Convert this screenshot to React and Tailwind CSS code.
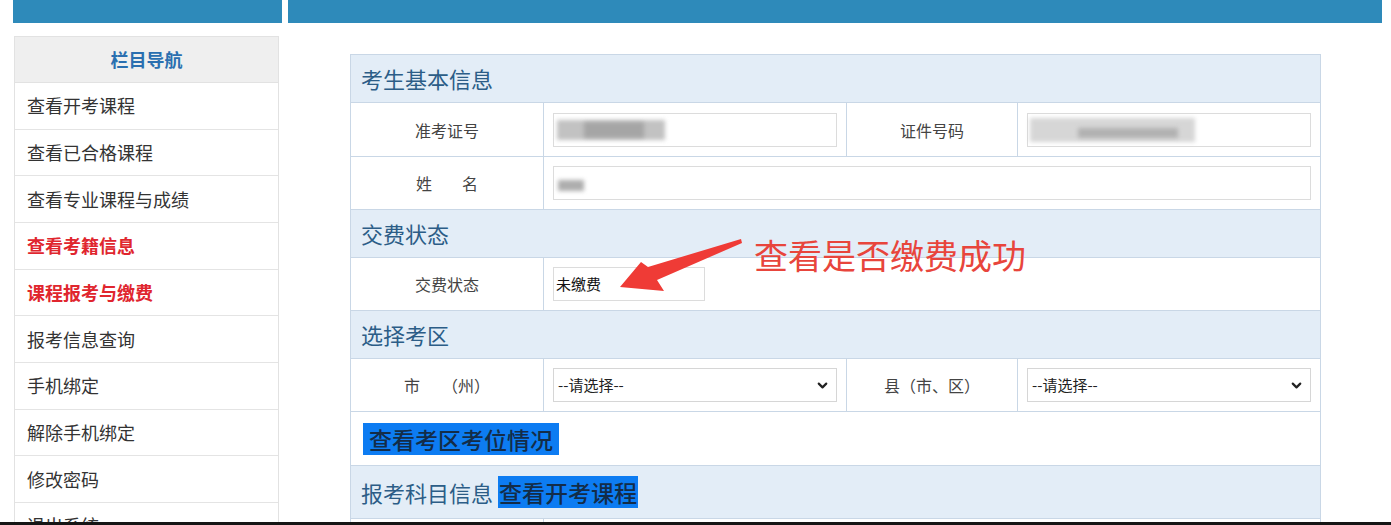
import React from "react";
import { ChevronDown } from "lucide-react";

const font = { fontFamily: '"Noto Sans CJK SC", "Noto Sans", sans-serif' };

const navItems = [
  { label: "查看开考课程" },
  { label: "查看已合格课程" },
  { label: "查看专业课程与成绩" },
  { label: "查看考籍信息", hot: true },
  { label: "课程报考与缴费", hot: true },
  { label: "报考信息查询" },
  { label: "手机绑定" },
  { label: "解除手机绑定" },
  { label: "修改密码" },
  { label: "退出系统" },
];

const Sidebar = () => (
  <div className="w-[265px] border border-[#e2e2e2] bg-white">
    <div className="h-[46px] bg-[#efefef] flex items-center justify-center text-[18px] font-bold text-[#2a6fb0] border-b border-[#e2e2e2]">
      栏目导航
    </div>
    {navItems.map((item) => (
      <div
        key={item.label}
        className={`h-[46.67px] flex items-center pl-[12px] border-b border-[#e4e4e4] text-[18px] ${
          item.hot ? "font-bold text-[#e0262e]" : "text-[#333]"
        }`}
      >
        {item.label}
      </div>
    ))}
  </div>
);

const Blur = ({ className }) => <div className={`absolute bg-[#9a9a9a] blur-[2px] ${className}`} />;

const SectionHead = ({ children }) => (
  <tr className="h-[48px]">
    <td colSpan={4} className="bg-[#e3edf7] border border-[#c9d7e6] pl-[10px] text-[22px] text-[#2c5d87]">
      {children}
    </td>
  </tr>
);

const Label = ({ children }) => (
  <td className="border border-[#c9d7e6] text-center text-[16px] text-[#444]">{children}</td>
);

const Select = () => (
  <div className="h-[34px] border border-[#d6d6d6] bg-white flex items-center justify-between pl-[4px] pr-[6px] text-[15px] text-[#222]">
    <span>--请选择--</span>
    <ChevronDown size={15} strokeWidth={3.5} className="text-[#222]" />
  </div>
);

const Highlight = ({ children, className }) => (
  <span className={`inline-block bg-[#0d7cf2] leading-[32px] text-[23px] font-medium text-[#132c48] ${className}`}>
    {children}
  </span>
);

const MainTable = () => (
  <table className="w-[970px] table-fixed border-collapse bg-white">
    <colgroup>
      <col className="w-[193px]" />
      <col className="w-[303px]" />
      <col className="w-[171px]" />
      <col className="w-[303px]" />
    </colgroup>
    <tbody>
      <SectionHead>考生基本信息</SectionHead>
      <tr className="h-[54px]">
        <Label>准考证号</Label>
        <td className="border border-[#c9d7e6] px-[9px]">
          <div className="relative h-[34px] border border-[#dcdcdc]">
            <Blur className="left-[3px] top-[6px] w-[108px] h-[20px] opacity-60" />
            <Blur className="left-[30px] top-[8px] w-[60px] h-[16px] opacity-70" />
          </div>
        </td>
        <Label>证件号码</Label>
        <td className="border border-[#c9d7e6] px-[9px]">
          <div className="relative h-[34px] border border-[#dcdcdc]">
            <Blur className="left-[2px] top-[4px] w-[165px] h-[24px] opacity-40" />
            <Blur className="left-[50px] top-[14px] w-[100px] h-[10px] opacity-60" />
          </div>
        </td>
      </tr>
      <tr className="h-[53px]">
        <Label>
          <span>姓</span>
          <span className="ml-[30px]">名</span>
        </Label>
        <td colSpan={3} className="border border-[#c9d7e6] px-[9px]">
          <div className="relative h-[34px] border border-[#dcdcdc]">
            <Blur className="left-[4px] top-[13px] w-[26px] h-[11px] opacity-80" />
          </div>
        </td>
      </tr>
      <SectionHead>交费状态</SectionHead>
      <tr className="h-[53px]">
        <Label>交费状态</Label>
        <td colSpan={3} className="border border-[#c9d7e6] px-[9px]">
          <div className="w-[152px] h-[34px] border border-[#dcdcdc] flex items-center pl-[2px] text-[15px] text-[#111]">
            未缴费
          </div>
        </td>
      </tr>
      <SectionHead>选择考区</SectionHead>
      <tr className="h-[53px]">
        <Label>
          <span>市</span>
          <span className="ml-[22px]">（州）</span>
        </Label>
        <td className="border border-[#c9d7e6] px-[9px]">
          <Select />
        </td>
        <Label>县（市、区）</Label>
        <td className="border border-[#c9d7e6] px-[9px]">
          <Select />
        </td>
      </tr>
      <tr className="h-[54px]">
        <td colSpan={4} className="border border-[#c9d7e6] pl-[12px]">
          <Highlight className="px-[6px]">查看考区考位情况</Highlight>
        </td>
      </tr>
      <tr className="h-[53px]">
        <td colSpan={4} className="bg-[#e3edf7] border border-[#c9d7e6] pl-[10px] text-[22px] text-[#2c5d87]">
          报考科目信息{" "}
          <Highlight className="px-[1px]">查看开考课程</Highlight>
        </td>
      </tr>
      <tr className="h-[40px]">
        <Label>{""}</Label>
        <td colSpan={3} className="border border-[#c9d7e6]" />
      </tr>
    </tbody>
  </table>
);

export default function App() {
  return (
    <div style={font} className="relative w-[1391px] h-[525px] overflow-hidden bg-white flex flex-col">
      <div className="flex gap-[6px] pl-[13px] pr-[9px] h-[23px] shrink-0">
        <div className="w-[269px] bg-[#2e8aba]" />
        <div className="flex-1 bg-[#2e8aba]" />
      </div>
      <div className="flex flex-1 overflow-hidden">
        <div className="ml-[14px] mt-[13px]">
          <Sidebar />
        </div>
        <div className="ml-[71px] mt-[31px]">
          <MainTable />
        </div>
      </div>
      <div className="h-[3px] shrink-0 bg-[#151515]" />

      <svg className="absolute left-0 top-0 pointer-events-none" width="1391" height="525">
        <polygon
          points="620,287 641,262 648,267 741,239 742,243 657,280 664,291"
          fill="#ef3b36"
        />
      </svg>
      <div className="absolute left-[754px] top-[238px] text-[34px] leading-none text-[#e8453c]">
        查看是否缴费成功
      </div>
    </div>
  );
}
